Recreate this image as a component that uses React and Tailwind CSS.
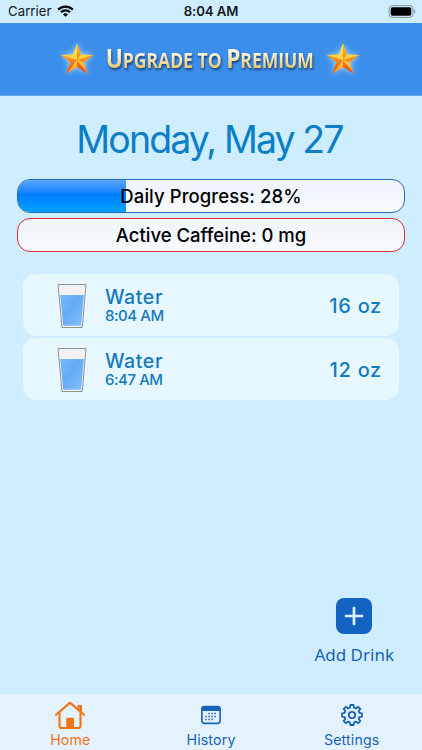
import React from 'react';

const drinks = [
  { name: 'Water', time: '8:04 AM', amount: '16 oz' },
  { name: 'Water', time: '6:47 AM', amount: '12 oz' },
];

const Star = () => (
  <svg className="w-9 h-9 shrink-0 drop-shadow-[0_0_3px_rgba(190,225,255,0.9)]" viewBox="0 0 36 36">
    <defs>
      <linearGradient id="starLight" gradientUnits="userSpaceOnUse" x1="0" y1="3" x2="0" y2="33">
        <stop offset="0" stopColor="#ffec5a" />
        <stop offset="0.6" stopColor="#ffc93a" />
        <stop offset="1" stopColor="#f9881f" />
      </linearGradient>
      <linearGradient id="starDark" gradientUnits="userSpaceOnUse" x1="0" y1="3" x2="0" y2="33">
        <stop offset="0" stopColor="#ffb624" />
        <stop offset="0.5" stopColor="#f5901c" />
        <stop offset="1" stopColor="#e0391c" />
      </linearGradient>
    </defs>
    <path d="M18 2.5L22 13.6L34.2 14L24.6 21.2L28.6 32.6L18 26L7.6 32.6L11.4 21.2L1.8 14L14 13.6Z" fill="url(#starLight)" />
    <path d="M18 2.5L18 19L22 13.6ZM34.2 14L18 19L24.6 21.2ZM28.6 32.6L18 19L18 26ZM7.6 32.6L18 19L11.4 21.2ZM1.8 14L18 19L11.4 21.2Z" fill="url(#starDark)" />
  </svg>
);

const StatusBar = () => (
  <div className="h-[23px] shrink-0 grid grid-cols-3 items-center pl-2 pr-[6px] text-[13.2px] text-[#14181c]">
    <div className="flex items-center gap-[5px]">
      <span className="tracking-[0.05px]">Carrier</span>
      <svg className="w-[17px] h-3" viewBox="0 0 17 12" fill="none" stroke="#05090c" strokeWidth="2.2">
        <path d="M1.1 4.6C5.2 0.5 11.8 0.5 15.9 4.6" />
        <path d="M3.9 7.3C6.5 4.8 10.5 4.8 13.1 7.3" />
        <path d="M8.5 11.8L5.9 9.2C7.4 7.9 9.6 7.9 11.1 9.2Z" fill="#05090c" stroke="none" />
      </svg>
    </div>
    <span className="text-center font-semibold tracking-[-0.1px] pr-[2px]">8:04 AM</span>
    <svg className="justify-self-end w-[28px] h-[13px]" viewBox="0 0 28 13">
      <rect x="1" y="0.6" width="24" height="11.8" rx="3.4" fill="none" stroke="#7f9299" />
      <rect x="2.7" y="2.3" width="20.6" height="8.4" rx="1.8" fill="#000" />
      <path d="M26.3 4.6C27.8 5.1 27.8 7.9 26.3 8.4Z" fill="#7f9299" />
    </svg>
  </div>
);

const PremiumBanner = () => (
  <div className="h-[73px] shrink-0 bg-[#3b8eea] border-b border-[#67aaf0] flex items-center justify-center pr-[2px]">
    <Star />
    <div className="w-[230px] flex justify-center">
      <span className="inline-block whitespace-nowrap font-['Open_Sans'] font-bold text-[20.5px] leading-7 bg-linear-to-b from-[#fffbe6] from-25% to-[#ecc76c] to-80% bg-clip-text text-transparent drop-shadow-[1px_2px_1px_rgba(15,45,90,0.75)] scale-x-[0.855]">
        <span className="text-[26.5px]">U</span>PGRADE TO <span className="text-[26.5px]">P</span>REMIUM
      </span>
    </div>
    <Star />
  </div>
);

const Glass = () => (
  <svg className="w-[30px] h-[46px]" viewBox="0 0 30 46">
    <defs>
      <linearGradient id="water" x1="0" y1="0" x2="1" y2="1">
        <stop offset="0" stopColor="#79b9f8" />
        <stop offset="0.45" stopColor="#62abf5" />
        <stop offset="1" stopColor="#84c2fa" />
      </linearGradient>
    </defs>
    <path d="M1 1.5H29L25.3 44.5H5Z" fill="#f0f2f3" stroke="#8d9294" />
    <path d="M3.2 12H26.8L24.2 42.8H6.2Z" fill="url(#water)" />
  </svg>
);

const DrinkRow = ({ drink }) => (
  <div className="h-[62px] rounded-[13px] bg-[#e7f7ff] flex items-center pt-[2px] pl-[34px] pr-[17px] text-[#137abd]">
    <Glass />
    <div className="ml-[18px] flex-1 font-medium">
      <div className="text-[19.5px] leading-[20px] tracking-[0.6px]">Water</div>
      <div className="text-[15px] leading-[18px] tracking-[-0.45px]">{drink.time}</div>
    </div>
    <span className="text-[20px] font-medium tracking-[0.7px]">{drink.amount}</span>
  </div>
);

const HomeIcon = () => (
  <svg className="w-8 h-8" viewBox="0 0 32 32" fill="none" stroke="#f47216" strokeWidth="2.1" strokeLinecap="round" strokeLinejoin="round">
    <path d="M2 15.8L15.5 4.1Q16 3.7 16.5 4.1L30 15.8" />
    <path d="M5.5 13.5V26.7Q5.5 29 7.8 29H24.2Q26.5 29 26.5 26.7V13.5" />
    <path d="M24.6 10.5V7H27V12.5" />
    <path d="M13.3 19.8H19V28.5H13.3Z" fill="#f47216" />
  </svg>
);

const HistoryIcon = () => (
  <svg className="w-[22px] h-5" viewBox="0 0 22 20" fill="#1962b8">
    <rect x="1.9" y="1.6" width="18.2" height="16.8" rx="2.6" fill="none" stroke="#1962b8" strokeWidth="1.6" />
    <path d="M1.5 6V4Q1.5 1 4.5 1H17.5Q20.5 1 20.5 4V6Z" />
    <path d="M8.3 7.8h1.5v1.5h-1.5zM11.3 7.8h1.5v1.5h-1.5zM14.3 7.8h1.5v1.5h-1.5zM5.3 10.8h1.5v1.5h-1.5zM8.3 10.8h1.5v1.5h-1.5zM11.3 10.8h1.5v1.5h-1.5zM14.3 10.8h1.5v1.5h-1.5zM5.3 13.8h1.5v1.5h-1.5zM8.3 13.8h1.5v1.5h-1.5zM11.3 13.8h1.5v1.5h-1.5z" />
  </svg>
);

// eight-toothed gear outline
const SettingsIcon = () => (
  <svg className="w-6 h-6" viewBox="0 0 24 24" fill="none" stroke="#1962b8" strokeWidth="1.8" strokeLinejoin="round">
    <path d="M10.4 2H13.6L14.2 4.7L15.8 5.4L18.1 3.8L20.3 6L18.7 8.3L19.4 9.9L22 10.4V13.6L19.4 14.1L18.7 15.7L20.3 18L18.1 20.2L15.8 18.6L14.2 19.3L13.6 22H10.4L9.8 19.3L8.2 18.6L5.9 20.2L3.7 18L5.3 15.7L4.6 14.1L2 13.6V10.4L4.6 9.9L5.3 8.3L3.7 6L5.9 3.8L8.2 5.4L9.8 4.7Z" />
    <circle cx="12" cy="12" r="3.2" />
  </svg>
);

const Tab = ({ icon, label, active }) => (
  <button className={`flex flex-col items-center pt-[5px] text-[14.2px] leading-[18px] tracking-[0.15px] ${active ? 'text-[#f47216]' : 'text-[#1962b8]'}`}>
    <span className="h-8 flex items-center justify-center">{icon}</span>
    <span>{label}</span>
  </button>
);

const App = () => {
  return (
    <div className="w-full h-screen flex flex-col overflow-hidden bg-[#ceedff] font-['Inter',sans-serif]">
      <StatusBar />
      <PremiumBanner />
      <main className="flex-1 flex flex-col">
        <h1 className="mt-[21px] pr-[3px] text-center text-[37.5px] leading-[46px] font-normal tracking-[-1.9px] text-[#0b7ec7]">Monday, May 27</h1>
        <div className="mt-[16px] mx-[17px] flex flex-col gap-[5px] text-[18.5px] font-medium text-black">
          <div className="relative h-[34px] rounded-[13px] border border-[#2c69b3] bg-linear-to-b from-[#eef4fb] to-[#f7fbff] overflow-hidden flex items-center justify-center">
            <div className="absolute inset-y-0 left-0 w-[28%] bg-linear-to-b from-[#55a8ff] via-[#007bff] via-45% to-[#00a2ff]" />
            <span className="relative pt-[2px] tracking-[0.08px]">Daily Progress: 28%</span>
          </div>
          <div className="h-[34px] rounded-[13px] border border-[#dc2f36] bg-linear-to-b from-[#eff4f9] to-[#f7fbff] flex items-center justify-center">
            <span className="pt-[2px]">Active Caffeine: 0 mg</span>
          </div>
        </div>
        <div className="mt-[22px] mx-[23px] flex flex-col gap-[2px]">
          {drinks.map((drink) => (
            <DrinkRow key={drink.time} drink={drink} />
          ))}
        </div>
        <button className="mt-auto mb-[27px] mr-[28px] self-end flex flex-col items-center text-[#1962b8]">
          <span className="w-9 h-9 rounded-[8px] bg-[#1463c0] flex items-center justify-center">
            <svg className="w-5 h-5" viewBox="0 0 20 20" stroke="#dff3ff" strokeWidth="2.7" strokeLinecap="round">
              <path d="M10 2V18M2 10H18" />
            </svg>
          </span>
          <span className="mt-[9px] text-[17px] leading-6 font-['Noto_Sans']">Add Drink</span>
        </button>
      </main>
      <nav className="h-[56px] shrink-0 grid grid-cols-3 bg-[#e3f2fd]">
        <Tab icon={<HomeIcon />} label="Home" active />
        <Tab icon={<HistoryIcon />} label="History" />
        <Tab icon={<SettingsIcon />} label="Settings" />
      </nav>
    </div>
  );
};

export default App;
